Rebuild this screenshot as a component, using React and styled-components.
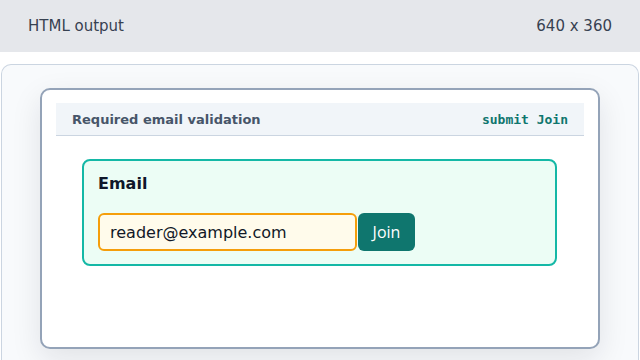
import React from "react";
import styled, { createGlobalStyle } from "styled-components";

const Global = createGlobalStyle`
  html, body { margin: 0; padding: 0; background: #ffffff; }
  body { width: 640px; height: 360px; overflow: hidden; font-family: "DejaVu Sans", sans-serif; }
  * { box-sizing: border-box; }
`;

const TopBar = styled.div`
  height: 52px;
  background: #e5e7eb;
  display: flex;
  align-items: center;
  justify-content: space-between;
  padding: 0 28px;
  font-family: "DejaVu Sans", sans-serif;
  font-size: 15px;
  color: #374151;
`;

const Stage = styled.div`
  margin: 12px 1px 0 1px;
  height: 296px;
  border: 1px solid #cbd5e1;
  border-bottom: none;
  border-radius: 10px 10px 0 0;
  background: #f8fafc;
  padding: 23px 38px 0 38px;
`;

const Card = styled.div`
  height: 261px;
  background: #ffffff;
  border: 2px solid #94a3b8;
  border-radius: 10px;
  padding: 13px 14px;
  box-shadow: 0 10px 30px rgba(15, 23, 42, 0.1);
`;

const CardHeader = styled.div`
  height: 33px;
  display: flex;
  align-items: center;
  justify-content: space-between;
  padding: 0 16px;
  background: #f1f5f9;
  border-bottom: 1px solid #cbd5e1;
`;

const Title = styled.span`
  font-family: "DejaVu Sans", sans-serif;
  font-weight: bold;
  font-size: 13px;
  color: #475569;
`;

const Code = styled.code`
  font-family: "DejaVu Sans Mono", monospace;
  font-weight: bold;
  font-size: 13px;
  color: #0f766e;
`;

const Body = styled.div`
  padding: 23px 27px 0 26px;
`;

const Form = styled.form`
  background: #ecfdf5;
  border: 2px solid #14b8a6;
  border-radius: 8px;
  padding: 13px 14px 13px;
`;

const Label = styled.label`
  display: block;
  font-family: "DejaVu Sans", sans-serif;
  font-weight: bold;
  font-size: 16px;
  line-height: 19px;
  color: #0f172a;
  margin-bottom: 20px;
`;

const Row = styled.div`
  display: flex;
  gap: 1px;
`;

const Input = styled.input`
  width: 259px;
  height: 38px;
  border: 2px solid #f59e0b;
  border-radius: 6px;
  background: #fffbeb;
  padding: 0 10px;
  font-family: "DejaVu Sans", sans-serif;
  font-size: 16px;
  color: #111827;
  outline: none;
`;

const Button = styled.button`
  height: 38px;
  width: 57px;
  border: none;
  border-radius: 6px;
  background: #0f766e;
  color: #ffffff;
  font-family: "Open Sans", sans-serif;
  font-size: 16px;
  padding: 0;
`;

export default function App() {
  return (
    <>
      <Global />
      <TopBar>
        <span>HTML output</span>
        <span>640 x 360</span>
      </TopBar>
      <Stage>
        <Card>
          <CardHeader>
            <Title>Required email validation</Title>
            <Code>submit Join</Code>
          </CardHeader>
          <Body>
            <Form onSubmit={(e) => e.preventDefault()}>
              <Label htmlFor="email">Email</Label>
              <Row>
                <Input id="email" type="email" required defaultValue="reader@example.com" />
                <Button type="submit">Join</Button>
              </Row>
            </Form>
          </Body>
        </Card>
      </Stage>
    </>
  );
}
